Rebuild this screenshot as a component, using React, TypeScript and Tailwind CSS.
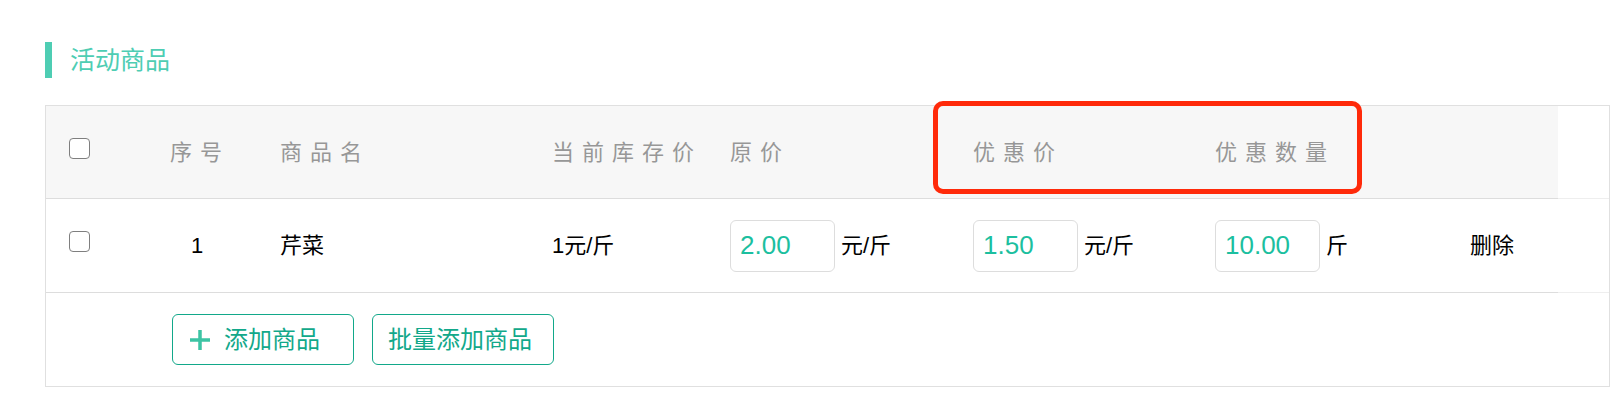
import React from "react";

const FONT = { fontFamily: '"Liberation Sans", "Noto Sans CJK SC", sans-serif' };

const GRID = "grid grid-cols-[75px_150px_281px_178px_243px_242px_218px_125px] w-[1512px]";

const Checkbox = () => (
  <span className="mb-2 block h-[21px] w-[21px] rounded-[4px] border-[1.5px] border-[#7f7f7f] bg-white" />
);

const PriceInput = ({ value, unit }: { value: string; unit: string }) => (
  <div className="flex items-center gap-[6px]">
    <div className="flex h-[52px] w-[105px] items-center rounded-[6px] border border-[#dddddd] bg-white pl-[9px] text-[26px] text-[#1cbf9f]">
      {value}
    </div>
    <span className="text-[22px] text-black">{unit}</span>
  </div>
);

const Plus = () => (
  <svg width="22" height="22" viewBox="0 0 22 22" className="shrink-0">
    <path d="M11 1v20M1 11h20" stroke="#3cc4a4" strokeWidth="3.5" fill="none" />
  </svg>
);

export default function App() {
  const head = "flex items-center text-[22px] tracking-[8px] text-[#979797]";
  const cell = "flex items-center text-[22px] text-black";

  return (
    <div className="min-h-[412px] bg-white pl-[45px] pt-[42px]" style={FONT}>
      {/* section title */}
      <div className="flex h-[36px] items-center">
        <span className="h-[36px] w-[7px] bg-[#4ecdb3]" />
        <span className="ml-[18px] text-[25px] leading-none text-[#4ecdb3]">活动商品</span>
      </div>

      {/* goods table */}
      <div className="relative mt-[27px] w-[1565px] border border-[#e0e0e0]">
        {/* header */}
        <div className="flex">
          <div className={`${GRID} h-[93px] border-b border-[#dddddd] bg-[#f7f7f7]`}>
            <div className="flex items-center pl-[23px]">
              <Checkbox />
            </div>
            <div className={`${head} justify-center pl-[8px]`}>序号</div>
            <div className={`${head} pl-[9px]`}>商品名</div>
            <div className={head}>当前库存价</div>
            <div className={head}>原价</div>
            <div className={head}>优惠价</div>
            <div className={head}>优惠数量</div>
            <div />
          </div>
          <div className="h-[93px] w-[51px] border-b border-[#eeeeee]" />
        </div>

        {/* row */}
        <div className="flex">
          <div className={`${GRID} h-[94px] border-b border-[#dddddd]`}>
            <div className="flex items-center pl-[23px]">
              <Checkbox />
            </div>
            <div className={`${cell} justify-center pl-[2px]`}>1</div>
            <div className={`${cell} pl-[9px]`}>芹菜</div>
            <div className={cell}>1元/斤</div>
            <div className="flex items-center">
              <PriceInput value="2.00" unit="元/斤" />
            </div>
            <div className="flex items-center">
              <PriceInput value="1.50" unit="元/斤" />
            </div>
            <div className="flex items-center">
              <PriceInput value="10.00" unit="斤" />
            </div>
            <div className={`${cell} justify-start pl-[37px]`}>删除</div>
          </div>
          <div className="h-[94px] w-[51px] border-b border-[#eeeeee]" />
        </div>

        {/* footer actions */}
        <div className="flex h-[93px] items-center gap-[18px] pl-[126px]">
          <button className="flex h-[51px] w-[182px] items-center gap-[13px] rounded-[6px] border border-[#12a88a] pl-[16px] text-[24px] text-[#12a88a]">
            <Plus />
            <span>添加商品</span>
          </button>
          <button className="flex h-[51px] w-[182px] items-center rounded-[6px] border border-[#12a88a] pl-[15px] text-[24px] text-[#12a88a]">
            批量添加商品
          </button>
        </div>

        {/* red highlight annotation */}
        <div className="pointer-events-none absolute left-[887px] top-[-5px] h-[93px] w-[429px] rounded-[10px] border-[5px] border-[#ff2a0a]" />
      </div>
    </div>
  );
}
